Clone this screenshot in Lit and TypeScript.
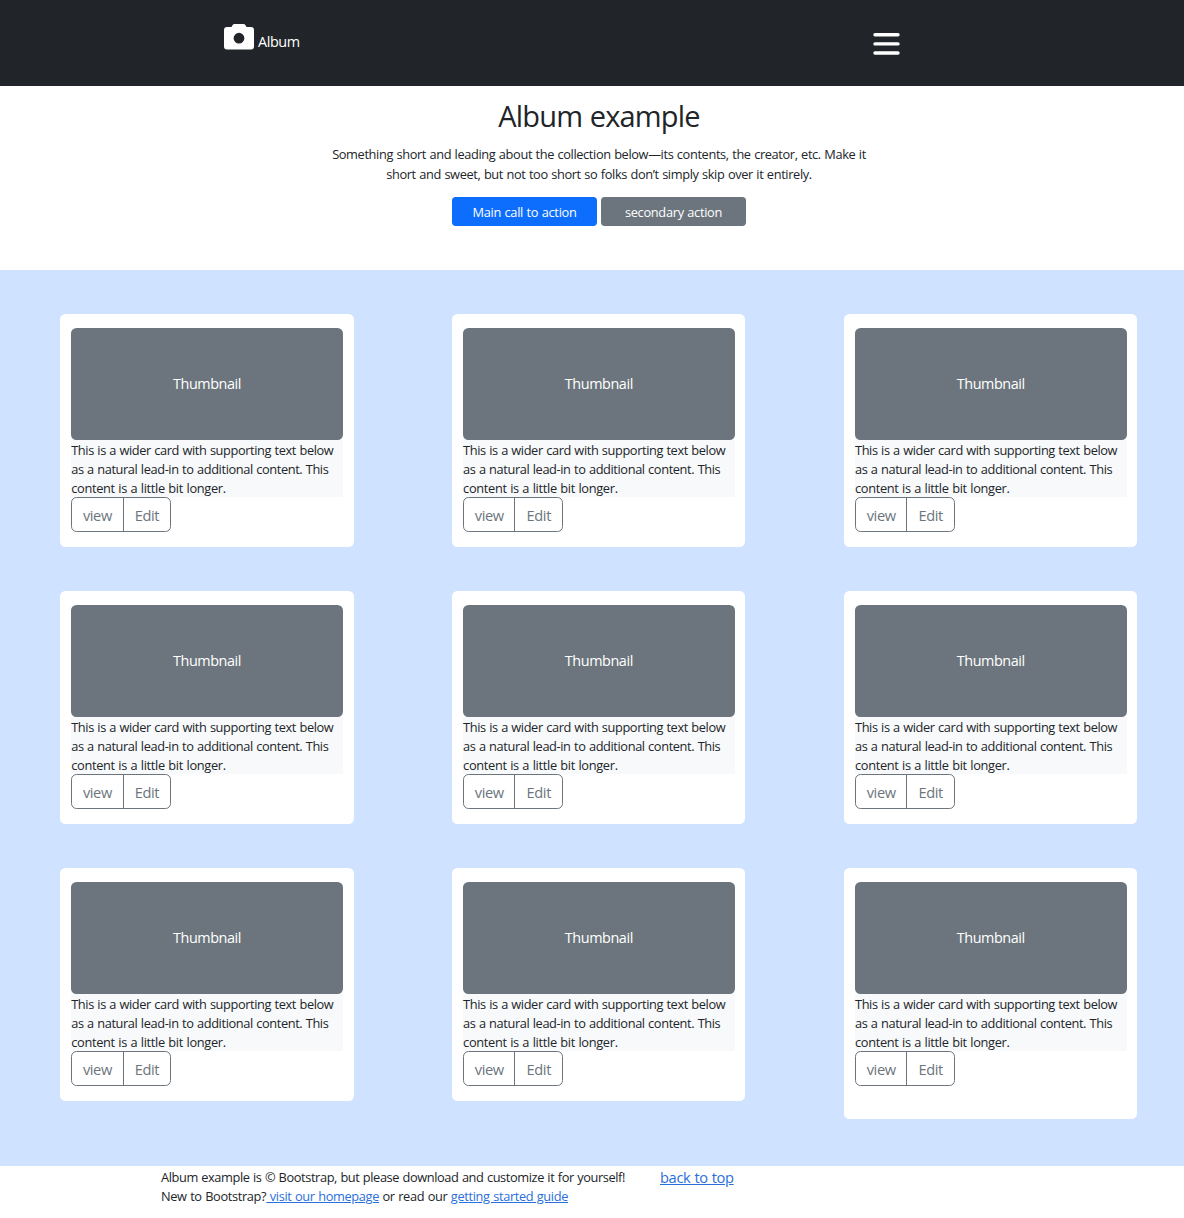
import { LitElement, html, css } from "lit";
import { customElement, property } from "lit/decorators.js";

@customElement("album-card")
class AlbumCard extends LitElement {
  @property({ type: Boolean, reflect: true }) tall = false;

  static styles = css`
    :host {
      display: block;
      box-sizing: border-box;
      width: 293.4px;
      height: 232.8px;
      padding: 14.6px 10.8px 14.6px 11px;
      background: #fff;
      border-radius: 5.5px;
    }
    :host([tall]) {
      height: 251px;
    }
    .thumb {
      display: flex;
      align-items: center;
      justify-content: center;
      box-sizing: border-box;
      height: 111.4px;
      border-radius: 5.5px;
      background: #6c757d;
      color: #fff;
      font-size: 14.4px;
      letter-spacing: -0.42px;
    }
    .text {
      box-sizing: border-box;
      height: 57.6px;
      margin: 0;
      padding-top: 1px;
      background: #f8f9fa;
      font-size: 12.8px;
      line-height: 19.2px;
      white-space: nowrap;
      letter-spacing: -0.39px;
      word-spacing: 0.5px;
    }
    .last {
      letter-spacing: -0.32px;
    }
    .group {
      display: flex;
      box-sizing: border-box;
      width: 100px;
      height: 34.8px;
      border: 1px solid #6c757d;
      border-radius: 5.5px;
      overflow: hidden;
    }
    .btn {
      box-sizing: border-box;
      width: 50.4px;
      padding: 0;
      border: 0;
      background: none;
      color: #6c757d;
      font: inherit;
      font-size: 14.67px;
      letter-spacing: -0.4px;
    }
    .btn + .btn {
      width: 47.6px;
      border-left: 1px solid #6c757d;
    }
  `;

  render() {
    return html`
      <div class="thumb">Thumbnail</div>
      <p class="text">
        This is a wider card with supporting text below<br />as a natural
        lead-in to additional content. This<br /><span class="last"
          >content is a little bit longer.</span
        >
      </p>
      <div class="group">
        <button class="btn">view</button><button class="btn">Edit</button>
      </div>
    `;
  }
}

@customElement("app-root")
class AppRoot extends LitElement {
  static styles = css`
    :host {
      display: block;
      min-height: 1218px;
      background: #fff;
      color: #212529;
      font-family: "Open Sans", "Noto Sans", sans-serif;
      font-size: 14.67px;
      line-height: 1.5;
    }
    .nav {
      box-sizing: border-box;
      display: flex;
      justify-content: space-between;
      height: 85.6px;
      padding: 22px 284px 0 224px;
      background: #212529;
      color: #fff;
    }
    .brand {
      display: flex;
      gap: 4px;
    }
    .camera {
      width: 30px;
      height: 30px;
    }
    .name {
      padding-top: 9.4px;
      font-size: 14.4px;
      letter-spacing: -0.4px;
    }
    .bars {
      width: 27px;
      height: 24px;
      margin-top: 10px;
    }
    .hero {
      box-sizing: border-box;
      display: flex;
      flex-direction: column;
      align-items: center;
      height: 184px;
      padding: 12.6px 0 0 14px;
      text-align: center;
    }
    .title {
      margin: 0;
      font-size: 29px;
      font-weight: 400;
      line-height: 35px;
      letter-spacing: -0.85px;
      word-spacing: 1px;
    }
    .lead {
      margin: 12.2px 0 13.2px;
      font-size: 12.8px;
      line-height: 19.2px;
      white-space: nowrap;
      letter-spacing: -0.37px;
      word-spacing: 0.5px;
    }
    .actions {
      display: flex;
      gap: 4.6px;
    }
    .cta {
      width: 144.4px;
      height: 28.8px;
      padding: 1.8px 0 0;
      border: 0;
      border-radius: 3.7px;
      background: #0d6efd;
      color: #fff;
      font: inherit;
      font-size: 12.8px;
      letter-spacing: -0.3px;
      word-spacing: 0.5px;
    }
    .secondary {
      background: #6c757d;
    }
    .album {
      box-sizing: border-box;
      display: grid;
      grid-template-columns: repeat(3, 293.4px);
      column-gap: 98.5px;
      row-gap: 44.2px;
      align-items: start;
      align-content: start;
      height: 896.6px;
      padding: 44.2px 0 0 60.2px;
      background: #cfe2ff;
    }
    .footer {
      display: flex;
      gap: 35px;
      padding-left: 161px;
    }
    .note {
      margin: 0;
      padding-top: 1.4px;
      width: 464px;
      font-size: 12.8px;
      line-height: 19.2px;
      white-space: nowrap;
      letter-spacing: -0.4px;
      word-spacing: 0.5px;
    }
    .second {
      letter-spacing: -0.35px;
    }
    .link {
      color: #2a6fdb;
      text-decoration: underline;
    }
    .top {
      letter-spacing: -0.35px;
      word-spacing: 0.5px;
    }
  `;

  render() {
    return html`
      <header class="nav">
        <div class="brand">
          <svg class="camera" viewBox="0 0 30 30" fill="#fff">
            <path
              fill-rule="evenodd"
              d="M3 5H7.4L8.5 3.3Q9.2 2 10.6 2H19.4Q20.8 2 21.5 3.3L22.6 5H27Q30 5 30 8V24.5Q30 27.5 27 27.5H3Q0 27.5 0 24.5V8Q0 5 3 5ZM15 10.8A5.4 5.4 0 1 0 15 21.6A5.4 5.4 0 1 0 15 10.8Z"
            />
          </svg>
          <span class="name">Album</span>
        </div>
        <svg
          class="bars"
          viewBox="0 0 27 24"
          stroke="#fff"
          stroke-width="3.4"
          stroke-linecap="round"
        >
          <path d="M2 2.8H25M2 11.9H25M2 21H25" />
        </svg>
      </header>
      <section class="hero">
        <h1 class="title">Album example</h1>
        <p class="lead">
          Something short and leading about the collection below—its contents,
          the creator, etc. Make it<br />short and sweet, but not too short so
          folks don’t simply skip over it entirely.
        </p>
        <div class="actions">
          <button class="cta">Main call to action</button>
          <button class="cta secondary">secondary action</button>
        </div>
      </section>
      <main class="album">
        ${Array.from(
          { length: 9 },
          (_, i) => html`<album-card ?tall=${i === 8}></album-card>`
        )}
      </main>
      <footer class="footer">
        <p class="note">
          Album example is © Bootstrap, but please download and customize it for
          yourself!<br /><span class="second"
            >New to Bootstrap?<a class="link"> visit our homepage</a> or read
            our <a class="link">getting started guide</a></span
          >
        </p>
        <a class="link top">back to top</a>
      </footer>
    `;
  }
}
